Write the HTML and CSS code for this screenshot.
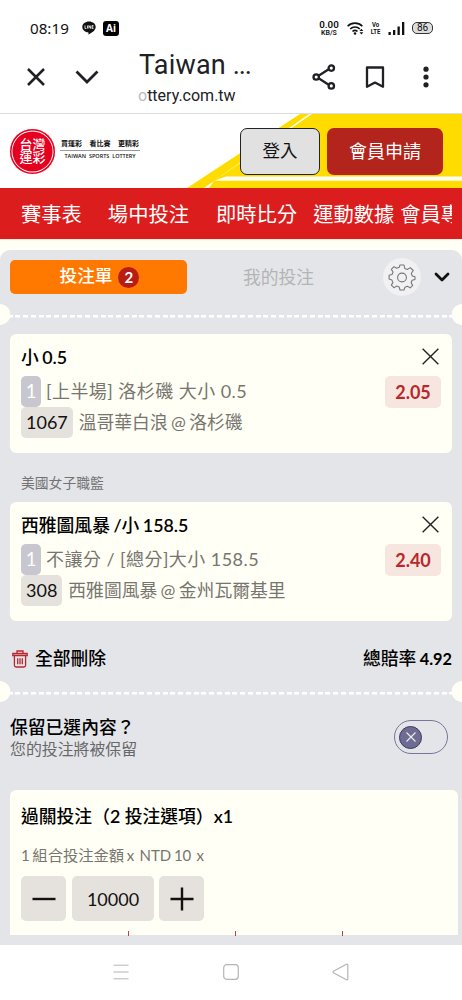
FILE: index.html
```html
<!DOCTYPE html>
<html lang="zh-Hant">
<head>
<meta charset="utf-8">
<title>Taiwan Sports Lottery</title>
<link rel="stylesheet" href="styles.css">
</head>
<body>
<div class="phone">
  <div class="status">
    <span class="time">08:19</span>
    <svg class="line-ico" width="14" height="14" viewBox="0 0 14 14"><path d="M7 .5C3.300.5.300 2.800.300 5.900c0 2.800 2.400 5 5.700 5.400.6.100.6.900.4 2.200 2.600-1.300 7.300-4 7.300-7.600C13.700 2.800 10.700.5 7 .5z" fill="#111"/><path d="M3 4.500v3h1.400M5.500 4.500v3M6.900 7.500v-3l1.800 3v-3M11.500 4.500H10.100v3h1.400M10.100 6h1.300" stroke="#fff" stroke-width=".8" fill="none"/></svg>
    <span class="ai">Ai</span>
    <span class="spacer"></span>
    <span class="speed"><b>0.00</b><small>KB/S</small></span>
    <svg class="wifi" width="17" height="13" viewBox="0 0 17 13"><g fill="none" stroke="#111" stroke-width="1.600"><path d="M.6 4.200C4.800.1 11.200.1 15.400 4.200M3.200 7c2.700-2.700 6.900-2.700 9.600 0M5.500 9.500c1.500-1.400 3.500-1.400 5 0"/></g><circle cx="8" cy="11.500" r="1.300" fill="#111"/><path d="M12.500 9l1.900-2.200L16.300 9zM12.500 10.200l1.900 2.200 1.900-2.200z" fill="#111"/></svg>
    <span class="volte"><b>Vo</b><b>LTE</b></span>
    <svg class="signal" width="17" height="13" viewBox="0 0 17 13"><path d="M.5 10h2.300v3H.5zM5 8h2.300v5H5zM9.500 4.500h2.300V13H9.500zM14 0h2.300v13H14z" fill="#111"/></svg>
    <span class="battery">86</span>
  </div>
  <div class="browser">
    <svg width="18" height="18" viewBox="0 0 18 18"><path d="M1 1l16 16M17 1L1 17" stroke="#202124" stroke-width="2.500"/></svg>
    <svg class="down" width="24" height="14" viewBox="0 0 24 14"><path d="M1.500 1.500L12 12 22.500 1.500" stroke="#202124" stroke-width="2.800" fill="none"/></svg>
    <div class="page-id"><div class="page-title">Taiwan <span>...</span></div><div class="page-url"><span>o</span>ttery.com.tw</div></div>
    <svg class="share" width="24" height="26" viewBox="0 0 24 26"><g fill="none" stroke="#202124" stroke-width="2.300"><path d="M7 11.400l9.300-5.800M7 14.600l9.300 5.800"/><circle cx="4.200" cy="13" r="2.700"/><circle cx="19.300" cy="4.100" r="2.700"/><circle cx="19.300" cy="21.900" r="2.700"/></g></svg>
    <svg class="mark" width="20" height="24" viewBox="0 0 20 24"><path d="M2 2.500h16v19.300l-8-4.200-8 4.200z" fill="none" stroke="#202124" stroke-width="2.300" stroke-linejoin="round"/></svg>
    <svg class="dots" width="6" height="22" viewBox="0 0 6 22"><g fill="#202124"><circle cx="3" cy="3.200" r="2.600"/><circle cx="3" cy="11" r="2.600"/><circle cx="3" cy="18.800" r="2.600"/></g></svg>
  </div>
  <header class="site">
    <svg class="rays" width="462" height="74" viewBox="0 0 462 74"><path d="M300 0H462V74H187z" fill="#fedc00"/><path d="M309 0h3L214 67l-5 7h-5z" fill="#fffef4"/><path d="M226 62.500H462v4.300H214z" fill="#fffef4"/></svg>
    <div class="logo"><span>台灣</span><span>運彩</span></div>
    <div class="slogan"><b><i>買運彩</i><i>看比賽</i><i>更精彩</i></b><small>TAIWAN&nbsp; SPORTS&nbsp; LOTTERY</small></div>
    <div class="login">登入</div>
    <div class="join">會員申請</div>
  </header>
  <nav class="menu"><div class="menu-in"><span>賽事表</span><span>場中投注</span><span>即時比分</span><span>運動數據</span><span>會員專</span></div></nav>
  <main class="slip-wrap">
    <div class="slip">
      <div class="tabs">
        <div class="tab-on">投注單<span class="count">2</span></div>
        <div class="tab-off">我的投注</div>
        <div class="gear"><svg width="28" height="28" viewBox="0 0 28 28" fill="none" stroke="#77777b" stroke-width="1.100" stroke-linejoin="round"><path d="M12 2h4l.8 3.500 2.500 1 3-1.900 2.900 2.900-1.900 3 1 2.500L27 13.800v2.700l-2.900.8-1 2.500 1.600 2.600-2.500 2.500-2.700-1.600-2.600 1L16 27h-4l-.8-2.900-2.600-1L6 24.700l-2.700-2.600 1.600-2.500-1-2.500L1.100 16v-3.700l2.900-.8 1-2.500-1.700-2.700L6 3.600l2.600 1.700 2.600-1z"/><circle cx="14" cy="14.500" r="4.400"/></svg></div>
        <svg class="fold" width="16" height="10" viewBox="0 0 16 10"><path d="M2 2l6 6 6-6" fill="none" stroke="#111" stroke-width="2.800" stroke-linecap="round" stroke-linejoin="round"/></svg>
      </div>
      <div class="tear"></div>
      <section class="bet">
        <div class="bet-head"><h3>小 <b>0.5</b></h3><svg width="17" height="17" viewBox="0 0 16 16"><path d="M.6.6l14.800 14.800M15.400.6L.6 15.400" stroke="#222" stroke-width="1.300"/></svg></div>
        <div class="bet-row"><span class="one">1</span><span class="desc market">[上半場] 洛杉磯 大小 0.5</span><span class="odds">2.05</span></div>
        <div class="bet-row"><span class="num">1067</span><span class="desc team">溫哥華白浪 @ 洛杉磯</span></div>
      </section>
      <div class="league">美國女子職籃</div>
      <section class="bet">
        <div class="bet-head"><h3>西雅圖風暴 <b>/</b>小 <b>158.5</b></h3><svg width="17" height="17" viewBox="0 0 16 16"><path d="M.6.6l14.800 14.800M15.400.6L.6 15.400" stroke="#222" stroke-width="1.300"/></svg></div>
        <div class="bet-row"><span class="one">1</span><span class="desc market">不讓分 / [總分]大小 158.5</span><span class="odds">2.40</span></div>
        <div class="bet-row"><span class="num">308</span><span class="desc team">西雅圖風暴 @ 金州瓦爾基里</span></div>
      </section>
      <div class="sum">
        <svg width="16" height="18" viewBox="0 0 16 18" fill="none" stroke="#b7282c" stroke-width="1.300"><path d="M.8 3.500h14.400v2H.8zM5 3.300V1h6v2.300M2.400 5.700v9.500q0 1.800 1.800 1.800h7.600q1.800 0 1.800-1.800V5.700M5.700 8.300v6M8 8.300v6M10.300 8.300v6"/></svg>
        <span class="clear">全部刪除</span><span class="total">總賠率 <b>4.92</b></span>
      </div>
      <div class="tear second"></div>
      <div class="keep">
        <div><div class="keep-q">保留已選內容？</div><div class="keep-a">您的投注將被保留</div></div>
        <div class="toggle"><div class="knob"><svg width="12" height="12" viewBox="0 0 12 12"><path d="M1.500 1.500l9 9M10.500 1.500l-9 9" stroke="#eee" stroke-width="1.100"/></svg></div></div>
      </div>
      <section class="parlay">
        <h3>過關投注（<b>2</b> 投注選項）<b>x1</b></h3>
        <p>1 <span>組合投注金額</span> x&nbsp; NTD 10 &nbsp;x</p>
        <div class="stepper">
          <div class="step"><svg width="24" height="24" viewBox="0 0 24 24"><path d="M.5 12h23" stroke="#111" stroke-width="2.400"/></svg></div>
          <div class="amount">10000</div>
          <div class="step"><svg width="24" height="24" viewBox="0 0 24 24"><path d="M.5 12h23M12 .5v23" stroke="#111" stroke-width="2.400"/></svg></div>
        </div>
        <div class="ticks"><i></i><i></i><i></i></div>
      </section>
    </div>
  </main>
  <footer class="sysnav">
    <svg width="16" height="16" viewBox="0 0 16 16"><path d="M.5 1.200h15M.5 8h15M.5 14.800h15" stroke="#b5b5b5"/></svg>
    <svg width="16" height="16" viewBox="0 0 16 16"><rect x=".7" y=".7" width="14.600" height="14.600" rx="3" fill="none" stroke="#b5b5b5" stroke-width="1.200"/></svg>
    <svg width="17" height="18" viewBox="0 0 17 18"><path d="M14.500 1.200L1.800 8q-1.600 1 0 2l12.700 6.800q1.300.5 1.300-1V2.200q0-1.500-1.300-1z" fill="none" stroke="#b5b5b5" stroke-width="1.200"/></svg>
  </footer>
</div>
</body>
</html>
```
FILE: styles.css
```css
* { box-sizing: border-box; }
body { margin: 0; background: #fff; font-family: Lato, "Noto Sans CJK TC", sans-serif; color: #111; }
svg { display: block; flex: none; }
h3, p { margin: 0; }
.phone { width: 462px; height: 1000px; overflow: hidden; display: flex; flex-direction: column; white-space: nowrap; }

.status { height: 50px; flex: none; display: flex; align-items: center; padding: 6px 29px 0 30px; font-family: Roboto, sans-serif; }
.time { font-family: "Noto Sans", sans-serif; font-size: 15.200px; width: 52px; }
.ai { margin-left: 7px; width: 16px; height: 15px; border-radius: 3px; background: #000; color: #fff; font: bold 10px/15px "Noto Sans", sans-serif; text-align: center; }
.spacer { flex: 1; }
.speed { width: 20px; display: flex; flex-direction: column; align-items: center; font-size: 9.800px; line-height: 8px; }
.speed b { font-weight: 600; line-height: 9px; }
.speed small { font-size: 7px; font-weight: 600; }
.wifi { margin-left: 8px; }
.volte { margin-left: 7px; width: 9px; display: flex; flex-direction: column; align-items: center; font-size: 8px; line-height: 7px; transform: scaleX(.75); }
.signal { margin-left: 8px; }
.battery { margin-left: 7px; width: 21px; height: 12px; border: 1.500px solid #333; border-radius: 5px; background: #ddd; font-size: 10px; line-height: 9.500px; text-align: center; }

.browser { height: 64px; flex: none; display: flex; align-items: center; padding: 0 32px 9px 27px; border-bottom: 1px solid #ddd; font-family: Roboto, sans-serif; color: #202124; }
.down { margin-left: 30px; }
.page-id { margin-left: 40px; width: 173px; }
.page-title { font-size: 27px; line-height: 32px; letter-spacing: .2px; }
.page-title span { letter-spacing: -1.200px; }
.page-url { font-size: 16px; line-height: 20px; padding-top: 5px; }
.page-url span { color: #bbb; margin-left: -1px; }
.mark { margin-left: 29px; }
.dots { margin-left: 38px; }

.site { height: 74px; flex: none; position: relative; display: flex; align-items: center; padding-left: 10px; background: #fff; }
.rays { position: absolute; left: 0; top: 0; }
.logo, .slogan, .login, .join { position: relative; }
.logo { width: 45px; height: 45px; border-radius: 50%; background: #e60020; box-shadow: inset 0 0 0 1.500px #e60020, inset 0 0 0 2.400px #fff; color: #fff; font-weight: 500; font-size: 13px; line-height: 13px; display: flex; flex-direction: column; align-items: center; justify-content: center; padding-bottom: 1px; }
.slogan { margin-left: 5px; width: 80px; }
.slogan b { display: flex; justify-content: space-between; padding: 0 1px 2px; font-size: 7px; line-height: 10px; font-weight: 700; border-bottom: 1px solid #999; }
.slogan i { font-style: normal; }
.slogan small { display: block; text-align: center; font: 600 5.500px/10px "Open Sans", sans-serif; padding-bottom: 4px; }
.login { margin-left: 100px; width: 80px; height: 47px; border: 1.500px solid #222; border-radius: 7px; background: #e1e1e1; font-size: 17.500px; line-height: 44px; text-align: center; }
.join { margin-left: 7px; width: 116px; height: 47px; border-radius: 7px; background: #b3241c; color: #fff; font-size: 18px; line-height: 47px; text-align: center; }

.menu { height: 52px; flex: none; background: #dc1d1e; padding: 0 10px 0 21px; border-bottom: 1px solid #ffe9df; }
.menu-in { overflow: hidden; display: flex; color: #fff; font-size: 20.300px; line-height: 52px; }
.menu-in span { flex: none; }
.menu-in span + span { margin-left: 26px; }
.menu-in span:nth-child(3) { margin-left: 27px; }
.menu-in span:nth-child(4) { margin-left: 16px; }
.menu-in span:nth-child(5) { margin-left: 6px; }

.slip-wrap { height: 705px; flex: none; background: #fffff5; padding-top: 10px; }
.slip { height: 695px; background: #e4e5e8; border-radius: 10px 10px 0 0; padding-top: 10px; }
.tabs { height: 34px; margin-left: 10px; display: flex; align-items: center; }
.tab-on { width: 177px; height: 34px; border-radius: 5px; background: #ff7900; color: #fff; font-size: 17.600px; line-height: 32px; font-weight: 500; display: flex; align-items: center; justify-content: center; gap: 6px; padding: 0 0 2px 2px; }
.count { width: 21px; height: 21px; border-radius: 50%; background: #b91c12; font-size: 15px; line-height: 21px; font-weight: 700; text-align: center; position: relative; top: 1px; }
.tab-off { margin-left: 56px; width: 140px; font-size: 17.800px; color: #b4b4b7; font-weight: 400; padding-bottom: 2px; }
.gear { width: 38px; height: 38px; border-radius: 50%; background: #f1f1f3; display: flex; align-items: center; justify-content: center; }
.fold { margin-left: 13px; }
.tear { height: 40px; background:
  radial-gradient(circle at 0 20.500px, #fffff5 10px, transparent 10.700px),
  radial-gradient(circle at 462px 20.500px, #fffff5 10px, transparent 10.700px),
  repeating-linear-gradient(90deg, #fff 0 5px, transparent 5px 7.750px) 0 20.500px / 100% 2.500px no-repeat; }
.bet { margin: 0 10px; height: 119px; border-radius: 6px; background: #fffff5; padding: 11px 11px 0; }
.bet-head { height: 31px; display: flex; justify-content: space-between; align-items: center; padding: 0 2px 8px 0; }
h3 { font-size: 17.800px; font-weight: 500; color: #000; }
h3 b { font-weight: 600; }
.bet-head h3 { word-spacing: -1px; padding-bottom: 2px; }
.bet-row { height: 31px; display: flex; align-items: center; }
.one, .num { height: 31px; border-radius: 5px; font-size: 18.500px; line-height: 31px; text-align: center; }
.one { width: 20px; background: #c8c6cf; color: #fff; margin-right: 5px; }
.num { background: #e5e1dc; color: #111; font-size: 18px; padding: 0 5px; margin-right: 6px; }
.desc { font-size: 17.800px; color: #77756f; font-weight: 400; padding-bottom: 4px; }
.market { font-size: 18px; letter-spacing: .45px; }
.team { word-spacing: -1.200px; }
.odds { margin-left: auto; width: 56px; height: 32px; border-radius: 5px; background: #f7e6df; color: #b7282c; font-weight: 700; font-size: 18px; line-height: 32px; text-align: center; }
.league { height: 49px; padding: 10px 0 0 21px; font-size: 13.800px; line-height: 40px; color: #737375; }
.sum { height: 51px; padding: 24px 10px 0 12px; display: flex; align-items: center; font-size: 17.800px; font-weight: 500; color: #000; }
.clear { margin-left: 7px; padding-bottom: 3px; }
.total { margin-left: auto; word-spacing: -1px; padding-bottom: 3px; }
.total b { font-size: 16.300px; font-weight: 700; }
.second { height: 40px; background-position: 0 -1px, 0 -1px, 0 19.500px; }
.keep { height: 78px; padding: 0 14px 0 10px; display: flex; justify-content: space-between; }
.keep-q { font-size: 17.800px; line-height: 24px; font-weight: 500; padding-top: 3px; color: #000; }
.keep-a { font-size: 15.900px; line-height: 20px; color: #68686b; }
.toggle { margin-top: 8px; width: 54px; height: 34px; border: 1.500px solid #77759a; border-radius: 17px; display: flex; align-items: center; padding-left: 4px; }
.knob { width: 23px; height: 23px; border-radius: 50%; background: #6e6c92; border: 1px solid #3c3b5a; display: flex; align-items: center; justify-content: center; }
.parlay { margin: 0 4px 0 10px; height: 145px; background: #fffff5; border-radius: 6px 6px 0 0; padding: 12px 11px 0; }
.parlay h3 { line-height: 28px; }
.parlay p { font-size: 15px; line-height: 20px; margin-top: 15px; color: #77756f; word-spacing: -1.200px; }
.parlay p span { font-size: 15.300px; }
.stepper { display: flex; margin-top: 11px; }
.step, .amount { height: 45px; border-radius: 5px; background: #e5e1dc; display: flex; align-items: center; justify-content: center; }
.step { width: 45px; }
.amount { width: 82px; margin: 0 5px 0 6px; font-size: 18px; }
.ticks { display: flex; gap: 106px; padding: 10px 0 0 107px; }
.ticks i { width: 1px; height: 5px; background: #b04545; }

.sysnav { flex: 1; background: #fff; display: flex; align-items: center; padding: 0 0 1px 113px; gap: 94px; }
.sysnav svg:last-child { margin-left: -1px; }
```
